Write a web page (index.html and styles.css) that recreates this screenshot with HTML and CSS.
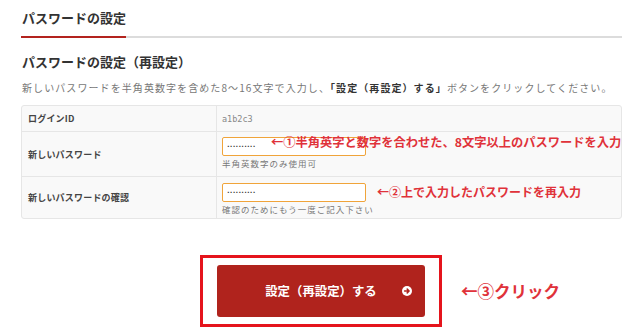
FILE: index.html
```html
<!DOCTYPE html>
<html lang="ja">
<head>
    <meta charset="UTF-8">
    <meta name="viewport" content="width=device-width, initial-scale=1.0">
    <title>パスワードの設定</title>
    <link rel="stylesheet" href="styles.css">
</head>
<body>
    <div class="container">
        <div class="page-head">
            <h1>パスワードの設定</h1>
        </div>

        <h2>パスワードの設定（再設定）</h2>
        <p class="lead">新しいパスワードを半角英数字を含めた8～16文字で入力し、<strong>「設定（再設定）する」</strong>ボタンをクリックしてください。</p>

        <!-- Form table -->
        <div class="form-table">
            <div class="row row-id">
                <div class="label">ログインID</div>
                <div class="value id-value">a1b2c3</div>
            </div>
            <div class="row row-pass">
                <div class="label">新しいパスワード</div>
                <div class="value">
                    <input type="text" class="pass-input" value="••••••••••" readonly>
                    <div class="hint">半角英数字のみ使用可</div>
                    <span class="note note-1">←①半角英字と数字を合わせた、8文字以上のパスワードを入力</span>
                </div>
            </div>
            <div class="row row-confirm">
                <div class="label">新しいパスワードの確認</div>
                <div class="value">
                    <input type="text" class="pass-input" value="••••••••••" readonly>
                    <div class="hint">確認のためにもう一度ご記入下さい</div>
                    <span class="note note-2">←②上で入力したパスワードを再入力</span>
                </div>
            </div>
        </div>

        <div class="submit-area">
            <div class="highlight">
                <button type="button" class="submit-btn">
                    <span class="btn-text">設定（再設定）する</span>
                    <svg class="btn-icon" width="10" height="10" viewBox="0 0 10 10">
                        <circle cx="5" cy="5" r="5" fill="#fff"/>
                        <path d="M2.6 5h4.4M5.2 3.1L7.1 5 5.2 6.9" stroke="#b0231d" stroke-width="1.5" fill="none" stroke-linecap="round" stroke-linejoin="round"/>
                    </svg>
                </button>
            </div>
            <span class="note-click">←③クリック</span>
        </div>
    </div>
</body>
</html>
```

FILE: styles.css
```css
/* General */
body {
    margin: 0;
    background: #fff;
    color: #333;
    font-family: "Noto Sans CJK JP", "Noto Sans", sans-serif;
}

.container {
    width: 601px;
    padding: 8px 0 0 21px;
}

/* Page heading with underline */
.page-head {
    display: flex;
    border-bottom: 2px solid #dcdcdc;
}

.page-head h1 {
    margin: 0 0 -2px;
    padding: 0 0 8px 1px;
    font-size: 13px;
    line-height: 20px;
    font-weight: bold;
    color: #333;
    border-bottom: 2px solid #b3231e;
}

h2 {
    margin: 14px 0 0 1px;
    font-size: 13px;
    line-height: 20px;
    font-weight: bold;
    color: #333;
}

.lead {
    margin: 8px 0 0 1px;
    font-size: 10px;
    line-height: 16px;
    letter-spacing: 1.08px;
    color: #777;
    white-space: nowrap;
}

.lead strong {
    color: #333;
}

/* Form table */
.form-table {
    margin-top: 9px;
    border: 1px solid #e6e6e6;
    border-radius: 3px;
    background: #f9f9f9;
}

.row {
    display: grid;
    grid-template-columns: 195px 1fr;
    border-bottom: 1px solid #e6e6e6;
}

.row:last-child {
    border-bottom: none;
}

.label {
    display: flex;
    align-items: center;
    padding-left: 6px;
    font-size: 9px;
    font-weight: bold;
    letter-spacing: 0.2px;
    color: #444;
    border-right: 1px solid #e6e6e6;
}

.value {
    position: relative;
    padding: 5px;
}

.row-id {
    height: 25px;
}

.id-value {
    display: flex;
    align-items: center;
    padding-top: 0;
    padding-bottom: 0;
    font-family: "DejaVu Sans Mono", monospace;
    font-size: 8.5px;
    color: #888;
}

.row-pass .value {
    padding-bottom: 6px;
}

.row-confirm .value {
    padding-top: 6px;
    padding-bottom: 2px;
}

.pass-input {
    display: block;
    box-sizing: border-box;
    width: 144px;
    height: 19px;
    margin: 0;
    padding: 0 4px;
    border: 1px solid #f0a43a;
    border-radius: 2px;
    background: #fff;
    font-family: "DejaVu Sans", sans-serif;
    font-size: 4.5px;
    letter-spacing: 0.2px;
    color: #333;
    outline: none;
}

.hint {
    font-size: 8.5px;
    line-height: 14px;
    letter-spacing: 1px;
    color: #777;
}

/* Red annotations laid over the form */
.note {
    position: absolute;
    font-weight: bold;
    color: #e0323a;
    white-space: nowrap;
    line-height: 18px;
}

.note-1 {
    left: 54px;
    top: 1px;
    font-size: 12.25px;
}

.note-2 {
    left: 160px;
    top: 6px;
    font-size: 12px;
}

/* Submit */
.submit-area {
    display: flex;
    align-items: center;
    gap: 19px;
    margin: 36px 0 0 179px;
}

.highlight {
    padding: 7px 14px;
    border: 3px solid #e5141c;
}

.submit-btn {
    display: grid;
    grid-template-columns: 1fr auto 1fr;
    align-items: center;
    width: 208px;
    height: 52px;
    padding: 0 13px;
    border: none;
    border-radius: 3px;
    background: #b0231d;
    color: #fff;
    font-family: "Noto Sans CJK JP", sans-serif;
    font-size: 12.4px;
    font-weight: bold;
    cursor: pointer;
}

.btn-text {
    grid-column: 2;
}

.btn-icon {
    grid-column: 3;
    justify-self: end;
}

.note-click {
    font-size: 16.5px;
    font-weight: bold;
    color: #e0323a;
}
```
